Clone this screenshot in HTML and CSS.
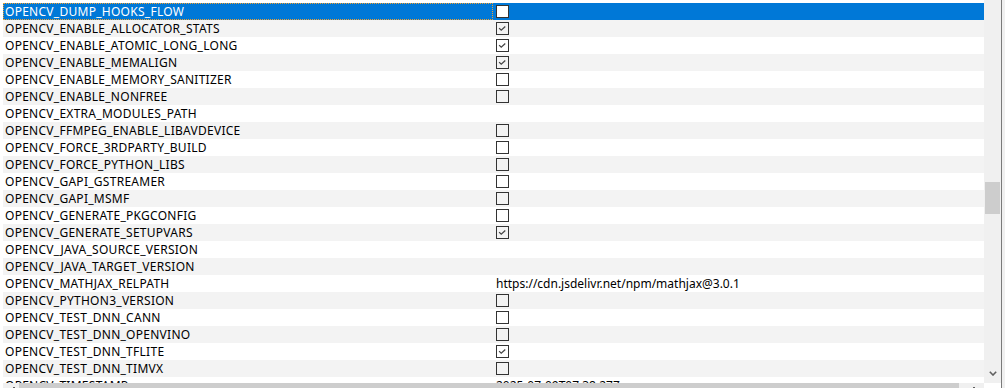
FILE: index.html
```html
<!DOCTYPE html>
<html lang="en">

<head>
    <meta charset="UTF-8" />
    <title>CMake cache entries</title>
    <link rel="stylesheet" href="styles.css">
</head>

<body>
    <div class="window">
        <div class="frame">
            <div class="main">
                <div class="table">
                    <div class="row selected"><div class="name">OPENCV_DUMP_HOOKS_FLOW</div><div class="value"><span class="box"></span></div></div>
                    <div class="row"><div class="name">OPENCV_ENABLE_ALLOCATOR_STATS</div><div class="value"><span class="box"><svg viewBox="0 0 13 13"><polyline points="2.5,6 5,8.5 9.8,4.2" /></svg></span></div></div>
                    <div class="row"><div class="name">OPENCV_ENABLE_ATOMIC_LONG_LONG</div><div class="value"><span class="box"><svg viewBox="0 0 13 13"><polyline points="2.5,6 5,8.5 9.8,4.2" /></svg></span></div></div>
                    <div class="row"><div class="name">OPENCV_ENABLE_MEMALIGN</div><div class="value"><span class="box"><svg viewBox="0 0 13 13"><polyline points="2.5,6 5,8.5 9.8,4.2" /></svg></span></div></div>
                    <div class="row"><div class="name">OPENCV_ENABLE_MEMORY_SANITIZER</div><div class="value"><span class="box"></span></div></div>
                    <div class="row"><div class="name">OPENCV_ENABLE_NONFREE</div><div class="value"><span class="box"></span></div></div>
                    <div class="row"><div class="name">OPENCV_EXTRA_MODULES_PATH</div><div class="value"></div></div>
                    <div class="row"><div class="name">OPENCV_FFMPEG_ENABLE_LIBAVDEVICE</div><div class="value"><span class="box"></span></div></div>
                    <div class="row"><div class="name">OPENCV_FORCE_3RDPARTY_BUILD</div><div class="value"><span class="box"></span></div></div>
                    <div class="row"><div class="name">OPENCV_FORCE_PYTHON_LIBS</div><div class="value"><span class="box"></span></div></div>
                    <div class="row"><div class="name">OPENCV_GAPI_GSTREAMER</div><div class="value"><span class="box"></span></div></div>
                    <div class="row"><div class="name">OPENCV_GAPI_MSMF</div><div class="value"><span class="box"></span></div></div>
                    <div class="row"><div class="name">OPENCV_GENERATE_PKGCONFIG</div><div class="value"><span class="box"></span></div></div>
                    <div class="row"><div class="name">OPENCV_GENERATE_SETUPVARS</div><div class="value"><span class="box"><svg viewBox="0 0 13 13"><polyline points="2.5,6 5,8.5 9.8,4.2" /></svg></span></div></div>
                    <div class="row"><div class="name">OPENCV_JAVA_SOURCE_VERSION</div><div class="value"></div></div>
                    <div class="row"><div class="name">OPENCV_JAVA_TARGET_VERSION</div><div class="value"></div></div>
                    <div class="row"><div class="name">OPENCV_MATHJAX_RELPATH</div><div class="value">https://cdn.jsdelivr.net/npm/mathjax@3.0.1</div></div>
                    <div class="row"><div class="name">OPENCV_PYTHON3_VERSION</div><div class="value"><span class="box"></span></div></div>
                    <div class="row"><div class="name">OPENCV_TEST_DNN_CANN</div><div class="value"><span class="box"></span></div></div>
                    <div class="row"><div class="name">OPENCV_TEST_DNN_OPENVINO</div><div class="value"><span class="box"></span></div></div>
                    <div class="row"><div class="name">OPENCV_TEST_DNN_TFLITE</div><div class="value"><span class="box"><svg viewBox="0 0 13 13"><polyline points="2.5,6 5,8.5 9.8,4.2" /></svg></span></div></div>
                    <div class="row"><div class="name">OPENCV_TEST_DNN_TIMVX</div><div class="value"><span class="box"></span></div></div>
                    <div class="row"><div class="name">OPENCV_TIMESTAMP</div><div class="value">2025-07-09T07:38:27Z</div></div>
                </div>
                <div class="vbar">
                    <div class="vthumb"></div>
                    <div class="varrow">
                        <svg viewBox="0 0 8 5"><polyline points="0.8,0.8 4,4 7.2,0.8" /></svg>
                    </div>
                </div>
            </div>
            <div class="hbar">
                <div class="harrow"><span class="tick"></span></div>
                <div class="hthumb"></div>
                <div class="harrow right"><span class="tick"></span></div>
            </div>
        </div>
        <div class="edge"></div>
    </div>
</body>

</html>
```

FILE: styles.css
```css
/* reset */
* {
    margin: 0;
    padding: 0;
    box-sizing: border-box;
}

body {
    font-family: "Noto Sans", "Liberation Sans", Arial, sans-serif;
    font-size: 12px;
    color: #000;
    background: #fff;
    overflow: hidden;
}

/* outer window */
.window {
    display: flex;
    width: 1005px;
    height: 388px;
}

.frame {
    width: 1001px;
    display: flex;
    flex-direction: column;
}

.edge {
    flex: 1;
    border-left: 1px solid #7a7a7a;
    background: #f0f0f0;
}

.main {
    display: flex;
    height: 383px;
}

/* cache table */
.table {
    flex: 1;
    margin: 3px 0 0 3px;
    overflow: hidden;
}

.row {
    display: flex;
    height: 17px;
    line-height: 17px;
    white-space: nowrap;
}

.row:nth-child(even) {
    background: #f3f3f3;
}

.row .name {
    width: 490px;
    padding-left: 2px;
    letter-spacing: 0.27px;
}

.row .value {
    flex: 1;
    padding-left: 3px;
    display: flex;
    align-items: center;
}

.row.selected {
    background: #0078d7;
    color: #fff;
}

.row.selected .name {
    outline: 1px dotted #f0a030;
    outline-offset: -1px;
}

/* checkbox */
.box {
    width: 13px;
    height: 13px;
    border: 1px solid #333;
    display: block;
}

.row.selected .box {
    background: #fff;
}

.box svg {
    display: block;
    width: 11px;
    height: 11px;
    fill: none;
    stroke: #444;
    stroke-width: 1.5;
}

/* vertical scrollbar */
.vbar {
    width: 17px;
    background: #f0f0f0;
    display: flex;
    flex-direction: column;
    align-items: center;
}

.vthumb {
    width: 15px;
    height: 32px;
    margin-top: 182px;
    background: #cdcdcd;
}

.varrow {
    margin-top: auto;
    margin-bottom: 7px;
    margin-left: 1px;
}

.varrow svg {
    display: block;
    width: 8px;
    height: 5px;
    fill: none;
    stroke: #606060;
    stroke-width: 1.6;
}

/* horizontal scrollbar */
.hbar {
    flex: 1;
    display: flex;
    background: #f0f0f0;
    margin-left: 3px;
    margin-right: 17px;
}

.harrow {
    width: 16px;
    position: relative;
}

.harrow.right {
    width: 25px;
}

.harrow .tick {
    position: absolute;
    top: 4px;
    left: 10px;
    width: 2px;
    height: 1px;
    background: #606060;
}

.harrow.right .tick {
    left: 14px;
}

.hthumb {
    flex: 1;
    background: #cdcdcd;
}
```
